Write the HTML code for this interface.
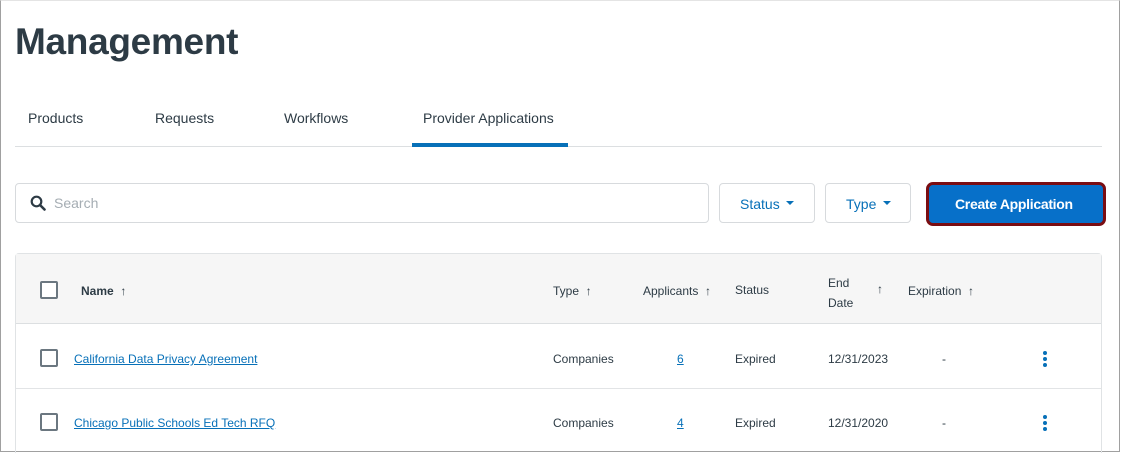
<!DOCTYPE html>
<html><head><style>
*{margin:0;padding:0;box-sizing:border-box}
body{width:1122px;height:455px;overflow:hidden;background:#fff;font-family:"Liberation Sans",sans-serif;color:#2d3b45;position:relative}
.a{position:absolute;white-space:nowrap}
.frame{position:absolute;left:0;top:0;width:1120px;height:452px;border:1px solid #a0a0a0;border-top-color:#e4e4e4}
.t{font-size:14px}
.s{font-size:12px}
.cb{position:absolute;width:18px;height:18px;border:2px solid #6b7780;border-radius:2px;background:#fff}
a{color:#0770b8;text-decoration:underline}
.dots{position:absolute;width:4px}
.dots i{display:block;width:4px;height:4px;border-radius:2px;background:#0770b8;margin-bottom:2px}
</style></head><body>
<div class="frame"></div>
<div class="a" style="left:15px;top:21px;font-size:37px;font-weight:bold;letter-spacing:-0.3px">Management</div>
<div class="a t" style="left:28px;top:110px">Products</div>
<div class="a t" style="left:155px;top:110px">Requests</div>
<div class="a t" style="left:284px;top:110px">Workflows</div>
<div class="a t" style="left:423px;top:110px">Provider Applications</div>
<div class="a" style="left:15px;top:146px;width:1087px;height:1px;background:#dcdfe1"></div>
<div class="a" style="left:412px;top:143px;width:156px;height:4px;background:#0770b8"></div>

<div class="a" style="left:15px;top:183px;width:694px;height:40px;border:1px solid #d7dadd;border-radius:4px"></div>
<svg class="a" style="left:30px;top:195px" width="16" height="16" viewBox="0 0 16 16"><circle cx="6.5" cy="6.5" r="4.8" fill="none" stroke="#2d3b45" stroke-width="2.2"/><path d="M10 10 L14.5 14.5" stroke="#2d3b45" stroke-width="2.6" stroke-linecap="round"/></svg>
<div class="a t" style="left:54px;top:195px;color:#a5adb3">Search</div>

<div class="a" style="left:719px;top:183px;width:96px;height:40px;border:1px solid #d7dadd;border-radius:4px"></div>
<div class="a t" style="left:740px;top:196px;color:#0770b8">Status</div>
<div class="a" style="left:786px;top:201px;border-left:4px solid transparent;border-right:4px solid transparent;border-top:4px solid #0770b8"></div>
<div class="a" style="left:825px;top:183px;width:86px;height:40px;border:1px solid #d7dadd;border-radius:4px"></div>
<div class="a t" style="left:846px;top:196px;color:#0770b8">Type</div>
<div class="a" style="left:883px;top:201px;border-left:4px solid transparent;border-right:4px solid transparent;border-top:4px solid #0770b8"></div>

<div class="a" style="left:926px;top:182px;width:180px;height:44px;border:3px solid #7a0d12;border-radius:7px;background:#0770c9"></div>
<div class="a t" style="left:955px;top:196px;color:#fff;font-weight:bold;letter-spacing:-0.3px">Create Application</div>

<div class="a" style="left:15px;top:253px;width:1087px;height:200px;border:1px solid #e0e3e5;border-bottom:none;border-radius:4px 4px 0 0"></div>
<div class="a" style="left:16px;top:254px;width:1085px;height:70px;background:#f6f6f6;border-bottom:1px solid #dcdfe1"></div>
<div class="a" style="left:16px;top:388px;width:1085px;height:1px;background:#e2e4e6"></div>

<div class="cb" style="left:40px;top:281px"></div>
<div class="a s" style="left:81px;top:284px;font-weight:bold">Name&nbsp; <span style="font-weight:normal">↑</span></div>
<div class="a s" style="left:553px;top:284px">Type&nbsp; ↑</div>
<div class="a s" style="left:643px;top:284px">Applicants&nbsp; ↑</div>
<div class="a s" style="left:735px;top:283px">Status</div>
<div class="a s" style="left:828px;top:273px;line-height:20px">End<br>Date</div>
<div class="a s" style="left:877px;top:282px">↑</div>
<div class="a s" style="left:908px;top:284px">Expiration&nbsp; ↑</div>

<div class="cb" style="left:40px;top:349px"></div>
<div class="a s" style="left:74px;top:352px"><a>California Data Privacy Agreement</a></div>
<div class="a s" style="left:553px;top:352px">Companies</div>
<div class="a s" style="left:677px;top:352px"><a>6</a></div>
<div class="a s" style="left:735px;top:352px">Expired</div>
<div class="a s" style="left:828px;top:352px">12/31/2023</div>
<div class="a s" style="left:942px;top:352px">-</div>
<div class="dots" style="left:1043px;top:351px"><i></i><i></i><i></i></div>

<div class="cb" style="left:40px;top:413px"></div>
<div class="a s" style="left:74px;top:416px"><a>Chicago Public Schools Ed Tech RFQ</a></div>
<div class="a s" style="left:553px;top:416px">Companies</div>
<div class="a s" style="left:677px;top:416px"><a>4</a></div>
<div class="a s" style="left:735px;top:416px">Expired</div>
<div class="a s" style="left:828px;top:416px">12/31/2020</div>
<div class="a s" style="left:942px;top:416px">-</div>
<div class="dots" style="left:1043px;top:415px"><i></i><i></i><i></i></div>
</body></html>
